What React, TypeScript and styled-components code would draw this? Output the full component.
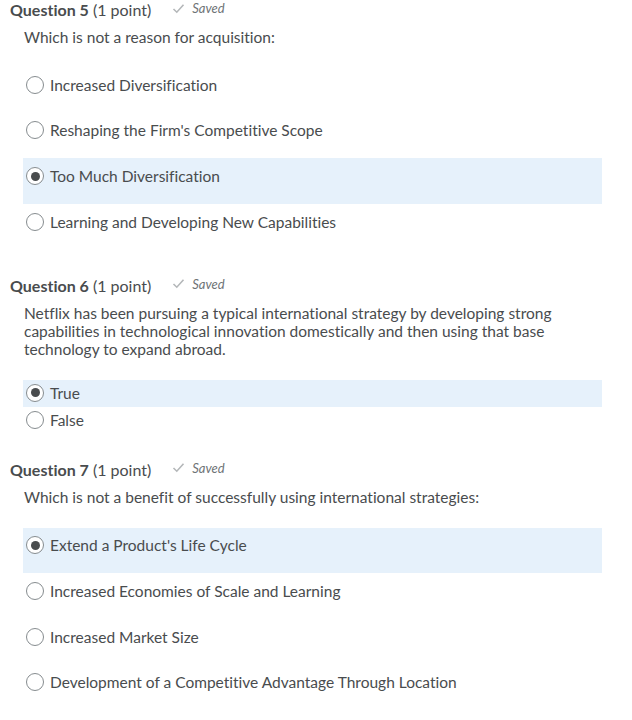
import React from "react";
import styled, { createGlobalStyle } from "styled-components";

const Global = createGlobalStyle`
  body {
    margin: 0;
    background: #ffffff;
    font-family: Lato, "Noto Sans", sans-serif;
    color: #494c4e;
    font-variant-ligatures: none;
  }
`;

type Q = {
  num: number;
  text: string[];
  options: string[];
  selected: number;
  compact?: boolean;
  listGap: number;
  after: number;
};

const questions: Q[] = [
  {
    num: 5,
    text: ["Which is not a reason for acquisition:"],
    options: [
      "Increased Diversification",
      "Reshaping the Firm's Competitive Scope",
      "Too Much Diversification",
      "Learning and Developing New Capabilities",
    ],
    selected: 2,
    listGap: 21,
    after: 26,
  },
  {
    num: 6,
    text: [
      "Netflix has been pursuing a typical international strategy by developing strong",
      "capabilities in technological innovation domestically and then using that base",
      "technology to expand abroad.",
    ],
    options: ["True", "False"],
    selected: 0,
    compact: true,
    listGap: 22,
    after: 26,
  },
  {
    num: 7,
    text: ["Which is not a benefit of successfully using international strategies:"],
    options: [
      "Extend a Product's Life Cycle",
      "Increased Economies of Scale and Learning",
      "Increased Market Size",
      "Development of a Competitive Advantage Through Location",
    ],
    selected: 0,
    listGap: 22,
    after: 0,
  },
];

function App() {
  return (
    <Page>
      <Global />
      {questions.map((q) => (
        <Question key={q.num} $after={q.after}>
          <Header>
            <Title>
              <b>Question {q.num}</b> (1 point)
            </Title>
            <Saved>
              <svg width="13" height="11" viewBox="0 0 13 11">
                <path d="M1.5 6 L4.8 9.2 L11.5 1.8" fill="none" stroke="#b4b7b9" strokeWidth="1.6" />
              </svg>
              <span>Saved</span>
            </Saved>
          </Header>
          <Prompt>
            {q.text.map((t, i) => (
              <div key={i}>{t}</div>
            ))}
          </Prompt>
          <Options $gap={q.listGap}>
            {q.options.map((o, i) => (
              <Option key={o} $selected={i === q.selected} $compact={q.compact}>
                <Radio $checked={i === q.selected} />
                <span>{o}</span>
              </Option>
            ))}
          </Options>
        </Question>
      ))}
    </Page>
  );
}

export default App;

const Page = styled.div`
  width: 632px;
  height: 720px;
  overflow: hidden;
  box-sizing: border-box;
`;

const Question = styled.div<{ $after: number }>`
  display: flex;
  flex-direction: column;
  margin-bottom: ${(p) => p.$after}px;
`;

const Header = styled.div`
  display: flex;
  align-items: center;
  height: 19px;
  padding-left: 10px;
`;

const Title = styled.div`
  font-size: 16px;
  line-height: 19px;
  color: #494c4e;
  b {
    font-weight: 700;
  }
`;

const Saved = styled.div`
  display: flex;
  align-items: center;
  gap: 7px;
  margin-left: 21px;
  margin-top: -3px;
  font-size: 13px;
  font-style: italic;
  color: #6e7376;
`;

const Prompt = styled.div`
  margin-top: 9px;
  padding-left: 24px;
  font-size: 15.5px;
  line-height: 18px;
  color: #494c4e;
`;

const Options = styled.div<{ $gap: number }>`
  display: flex;
  flex-direction: column;
  margin-left: 23px;
  width: 579px;
  margin-top: ${(p) => p.$gap}px;
`;

const Option = styled.div<{ $selected: boolean; $compact?: boolean }>`
  display: flex;
  align-items: center;
  gap: 6px;
  box-sizing: border-box;
  height: ${(p) => (p.$compact ? "27px" : "45.67px")};
  padding: ${(p) => (p.$compact ? "0 3px 1px" : "0 3px 10px")};
  background: ${(p) => (p.$selected ? "#e6f1fb" : "transparent")};
  font-size: 15.5px;
  color: #494c4e;
`;

const Radio = styled.span<{ $checked: boolean }>`
  position: relative;
  flex: none;
  width: 18px;
  height: 18px;
  box-sizing: border-box;
  border-radius: 50%;
  border: 1px solid #868c8f;
  background: #ffffff;
  &::after {
    content: "";
    display: ${(p) => (p.$checked ? "block" : "none")};
    position: absolute;
    left: 3.5px;
    top: 3.5px;
    width: 9px;
    height: 9px;
    border-radius: 50%;
    background: #494c4e;
  }
`;
